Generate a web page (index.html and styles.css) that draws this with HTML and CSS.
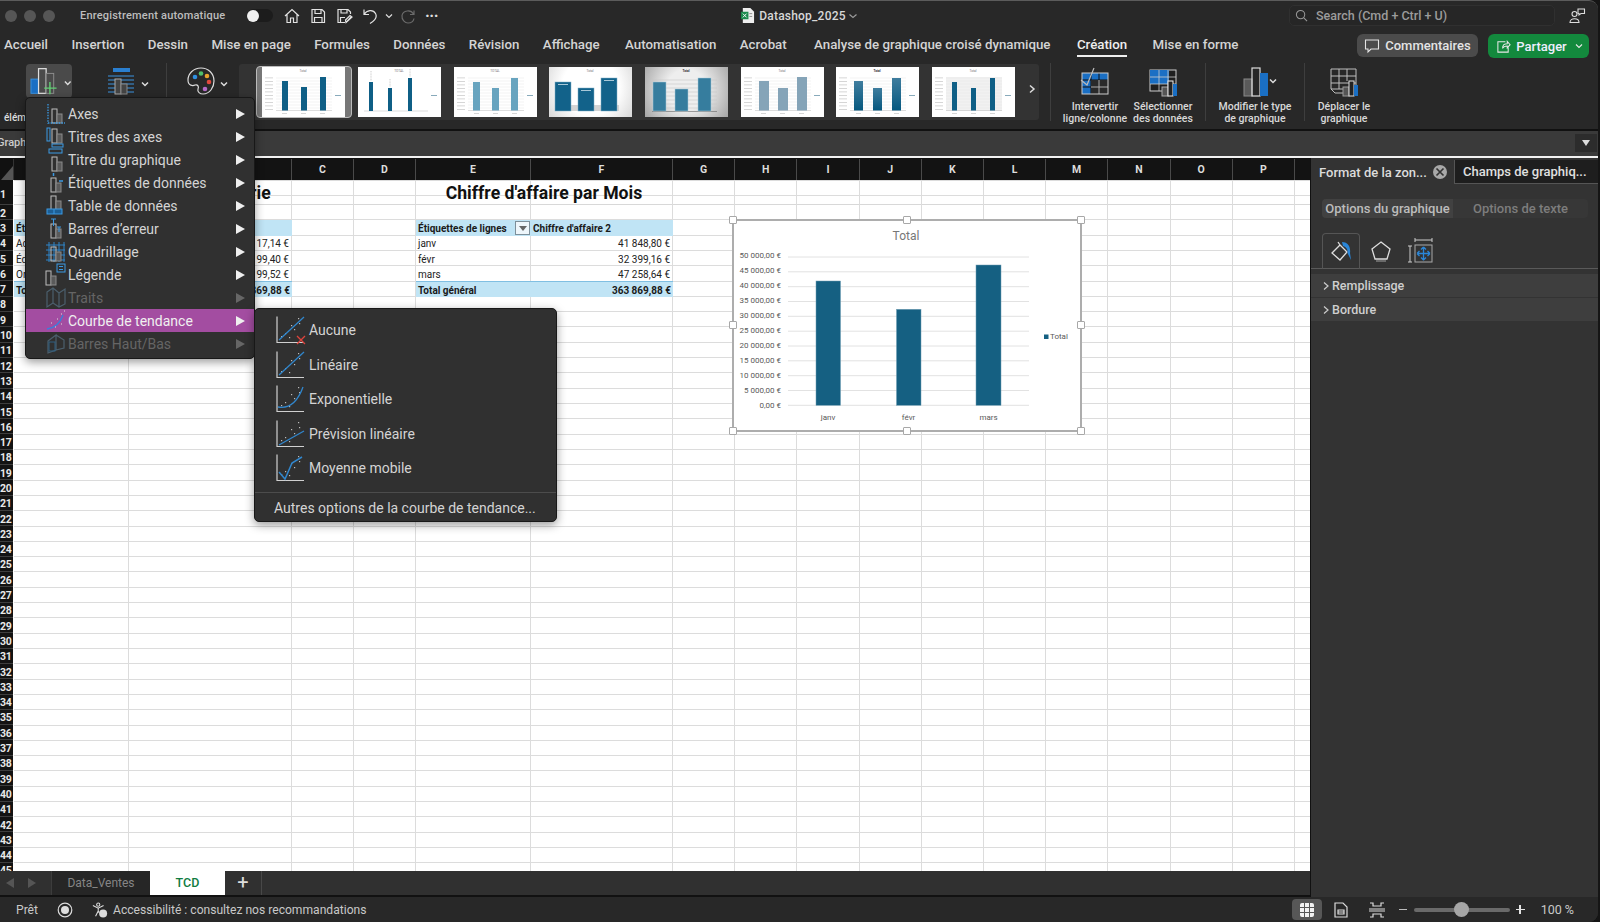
FILE: index.html
```html
<!DOCTYPE html>
<html lang="fr">
<head>
<meta charset="utf-8">
<title>Datashop_2025</title>
<link rel="stylesheet" href="styles.css">
</head>
<body>
<svg class="defs" aria-hidden="true">
  <symbol id="bars" viewBox="0 0 20 24"><rect x="6" y="7" width="5" height="14" fill="none" stroke="#bdbdbd"/><rect x="11" y="12" width="5" height="9" fill="#5a5a5a" stroke="#8a8a8a"/></symbol>
  <symbol id="trend-dots" viewBox="0 0 28 28"><g fill="#bbb"><rect x="5" y="20" width="1.2" height="1.2"/><rect x="9" y="17" width="1.2" height="1.2"/><rect x="13" y="21" width="1.2" height="1.2"/><rect x="15" y="9" width="1.2" height="1.2"/><rect x="18" y="13" width="1.2" height="1.2"/><rect x="22" y="2" width="1.2" height="1.2"/><rect x="23" y="7" width="1.2" height="1.2"/></g><path d="M1 .5V26.5H28" fill="none" stroke="#d0d0d0" stroke-width="1.2"/></symbol>
  <symbol id="t-grid" viewBox="0 0 83 50"><g stroke="#e6e6e6" stroke-width=".5"><path d="M14 11H70M14 14H70M14 17H70M14 20H70M14 23H70M14 26H70M14 29H70M14 32H70M14 35H70M14 38H70M14 41H70"/></g><path d="M14 43.5H70" stroke="#bbb" stroke-width=".5"/><g fill="#ccc"><rect x="3" y="10.500" width="8" height=".8"/><rect x="3" y="14" width="8" height=".8"/><rect x="3" y="17.500" width="8" height=".8"/><rect x="3" y="21" width="8" height=".8"/><rect x="3" y="24.500" width="8" height=".8"/><rect x="3" y="28" width="8" height=".8"/><rect x="3" y="31.500" width="8" height=".8"/><rect x="3" y="35" width="8" height=".8"/><rect x="3" y="38.500" width="8" height=".8"/><rect x="3" y="42" width="8" height=".8"/><rect x="20" y="46" width="5" height=".8"/><rect x="39" y="46" width="5" height=".8"/><rect x="58" y="46" width="5" height=".8"/></g><rect x="73" y="28" width="6" height="1" fill="#8ab"/></symbol>
</svg>

<div class="app">
  <header class="titlebar">
    <div class="tb-left">
      <div class="lights"><i></i><i></i><i></i></div>
      <span class="autosave">Enregistrement automatique</span>
      <span class="toggle"><b></b></span>
      <div class="qa">
        <svg class="qa-icon" viewBox="0 0 18 18"><path d="M2 9 9 2.500 16 9M4 7.500V15.500H7.500V11H10.500V15.500H14V7.500"/></svg>
        <svg class="qa-icon" viewBox="0 0 18 18"><path d="M3 2.500H13L15.500 5V15.500H3ZM6 2.500V6.500H12V2.500M5.500 15.500V10.500H13V15.500"/></svg>
        <svg class="qa-icon" viewBox="0 0 18 18"><path d="M10 15.500H3V2.500H13L15.500 5V7M6 2.500V6H12V2.500M5.500 15V10.500H10M11 15.500 16.500 9.500M11 15.500 10.500 13 15 8.500 17 10Z"/></svg>
        <svg class="qa-icon" viewBox="0 0 18 18"><path d="M3 2.500V7.500H8M3 7.500C6 3 12 2 14.500 6.500 16.500 10 13 14 9 16.500"/></svg>
        <svg class="qa-chev" viewBox="0 0 10 10"><path d="M2 3.500 5 6.500 8 3.500"/></svg>
        <svg class="qa-icon dim redo" viewBox="0 0 18 18"><path d="M15 3.500V7.500H11M14.500 7C12 2.500 4 3 3 8.500 2.500 13 6 16 9 16 12 16 14.500 14 15 11.500"/></svg>
        <span class="more">···</span>
      </div>
    </div>
    <div class="doc-title">
      <svg class="doc-icon" viewBox="0 0 16 18"><path d="M3 1H11L15 5V17H3Z" fill="#eee"/><rect x="1" y="5" width="8" height="8" fill="#1d8a4e"/><path d="M3 7 7 11M7 7 3 11" stroke="#fff"/><path d="M10 7H13M10 10H13" stroke="#8a8a8a"/></svg>
      <span>Datashop_2025</span>
      <svg class="qa-chev dim" viewBox="0 0 10 10"><path d="M1.500 3.500 5 6.500 8.500 3.500"/></svg>
    </div>
    <div class="tb-right">
      <div class="search">
        <svg class="search-icon" viewBox="0 0 14 14"><circle cx="6" cy="6" r="4.500"/><path d="M9.500 9.500 13 13"/></svg>
        <span>Search (Cmd + Ctrl + U)</span>
      </div>
      <svg class="coauth" viewBox="0 0 18 18"><circle cx="6.500" cy="7" r="2.500"/><path d="M2 15.500C2 10.500 11 10.500 11 15.500Z"/><path d="M10 2H16.500V6.500H13L11 8V6.500H10Z"/></svg>
    </div>
  </header>

  <nav class="tabs">
    <div class="tab-list">
      <a>Accueil</a><a>Insertion</a><a>Dessin</a><a>Mise en page</a><a>Formules</a><a>Données</a><a>Révision</a><a>Affichage</a><a class="gap-2">Automatisation</a><a>Acrobat</a><a class="gap-4">Analyse de graphique croisé dynamique</a><a class="active">Création</a><a class="gap-2">Mise en forme</a>
    </div>
    <div class="tab-actions">
      <button class="btn-comments">
        <svg viewBox="0 0 16 16"><path d="M1.500 2H14.500V11H7L4 14V11H1.500Z"/></svg>Commentaires
      </button>
      <button class="btn-share">
        <svg viewBox="0 0 16 16"><path d="M10 3H2V14H13V9M7 10C7 6 9 5 12 5V2.500L15 6 12 9.500V7.500C9 7.500 8 8 7 10Z"/></svg>Partager
        <svg class="share-chev" viewBox="0 0 10 10"><path d="M2 3.500 5 6.500 8 3.500"/></svg>
      </button>
    </div>
  </nav>

  <section class="ribbon">
    <div class="rb-left">
      <div class="rb-top">
        <button class="rb-add">
          <svg class="rb-add-icon" viewBox="0 0 29 28"><rect x="1" y="12" width="8" height="15" fill="#1a6fc4" stroke="#3a93e0"/><rect x="9" y="1" width="8" height="26" fill="none" stroke="#e0e0e0" stroke-width="1.300"/><rect x="17" y="6" width="8" height="21" fill="#4b4b4b" stroke="#8e8e8e"/><path d="M21 15V28M15 21.500H28" stroke="#62d074" stroke-width="1.500"/></svg>
          <svg class="rb-chev" viewBox="0 0 10 10"><path d="M2 3.500 5 6.500 8 3.500"/></svg>
        </button>
        <div class="rb-layout">
          <svg class="rb-layout-icon" viewBox="0 0 28 28"><rect x="6" y="1" width="17" height="4" fill="#2a7fd0"/><path d="M1 9H27M1 13H27M1 17H27M1 21H27M1 25H27" stroke="#3a93e0"/><rect x="8" y="12" width="6" height="15" fill="#444" stroke="#aaa"/><rect x="14" y="17" width="6" height="10" fill="#444" stroke="#888"/></svg>
          <svg class="rb-chev" viewBox="0 0 10 10"><path d="M2 3.500 5 6.500 8 3.500"/></svg>
        </div>
        <i class="rb-div"></i>
        <div class="rb-palette">
          <svg class="rb-palette-icon" viewBox="0 0 28 28"><path d="M14 1C6 1 1 7 1 13 1 19 6 19 8 18 11 17 12 20 11 22 10 25 13 27 16 27 23 27 27 20 27 14 27 6 21 1 14 1Z" fill="none" stroke="#ddd" stroke-width="1.200"/><circle cx="8" cy="10" r="2.300" fill="#2f8fe0"/><circle cx="14" cy="6.500" r="2.300" fill="#4fc06a"/><circle cx="20" cy="9" r="2.300" fill="#e8a22d"/><circle cx="22" cy="15" r="2.300" fill="#e2483d"/><circle cx="18" cy="22" r="2.300" fill="#b46cc8"/></svg>
          <svg class="rb-chev" viewBox="0 0 10 10"><path d="M2 3.500 5 6.500 8 3.500"/></svg>
        </div>
      </div>
      <span class="rb-elem">élément</span>
    </div>

    <div class="gallery">
      <div class="thumb selected"><svg viewBox="0 0 83 50"><rect width="83" height="50" fill="#fff"/><use href="#t-grid" width="83" height="50"/><text class="tt" x="41" y="5">Total</text><g fill="#0f5f86"><rect x="20" y="14" width="6" height="29.500"/><rect x="39" y="20" width="6" height="23.500"/><rect x="58" y="10" width="6" height="33.500"/></g></svg></div>
      <div class="thumb"><svg viewBox="0 0 83 50"><rect width="83" height="50" fill="#fff"/><text class="tt" x="41" y="5">TOTAL</text><path d="M6 44H70" stroke="#bbb" stroke-width=".5"/><path d="M13 4V14M32 12V20M52 2V10" stroke="#ccc" stroke-dasharray="1 .6"/><g fill="#0f5f86"><rect x="11" y="15" width="4" height="29"/><rect x="30" y="21" width="4" height="23"/><rect x="50" y="11" width="4" height="33"/></g><rect x="73" y="28" width="6" height="1" fill="#8ab"/></svg></div>
      <div class="thumb"><svg viewBox="0 0 83 50"><rect width="83" height="50" fill="#fff"/><use href="#t-grid" width="83" height="50"/><text class="tt" x="41" y="5">TOTAL</text><g fill="#68a4bf"><rect x="19" y="15" width="7" height="28.500"/><rect x="38" y="21" width="7" height="22.500"/><rect x="57" y="11" width="7" height="32.500"/></g></svg></div>
      <div class="thumb shade"><svg viewBox="0 0 83 50"><text class="tt" x="41" y="5">Total</text><rect x="6" y="38" width="64" height="6" fill="#d4d4d4"/><g fill="#12628a" stroke="#7fb0c8" stroke-width=".5"><rect x="6" y="15" width="16" height="29"/><rect x="29" y="21" width="16" height="23"/><rect x="52" y="11" width="16" height="33"/></g><g fill="#cfe3ec"><rect x="9" y="17" width="10" height=".8"/><rect x="32" y="23" width="10" height=".8"/><rect x="55" y="13" width="10" height=".8"/></g></svg></div>
      <div class="thumb grey"><svg viewBox="0 0 83 50"><text class="tt dark" x="41" y="5">Total</text><path d="M7 13H72M7 17H72M7 21H72M7 25H72M7 29H72M7 33H72M7 37H72M7 41H72" stroke="#c6c6c6" stroke-width=".6"/><path d="M7 44.500H72" stroke="#666" stroke-width=".6"/><g fill="#367d9e" stroke="#a8cbdb" stroke-width=".5"><rect x="8" y="15" width="13" height="29"/><rect x="30" y="22" width="13" height="22"/><rect x="53" y="11" width="13" height="33"/></g></svg></div>
      <div class="thumb"><svg viewBox="0 0 83 50"><rect width="83" height="50" fill="#fff"/><use href="#t-grid" width="83" height="50"/><text class="tt" x="41" y="5">Total</text><g fill="#85a4b8"><rect x="18" y="14" width="10" height="29.500"/><rect x="37" y="21" width="10" height="22.500"/><rect x="56" y="10" width="10" height="33.500"/></g></svg></div>
      <div class="thumb"><svg viewBox="0 0 83 50"><defs><linearGradient id="bar-grad" x1="0" y1="0" x2="0" y2="1"><stop offset="0" stop-color="#3f7d9e"/><stop offset="1" stop-color="#06587f"/></linearGradient></defs><rect width="83" height="50" fill="#fff"/><use href="#t-grid" width="83" height="50"/><text class="tt dark" x="41" y="5">Total</text><g fill="url(#bar-grad)"><rect x="18" y="14" width="9" height="29.500"/><rect x="37" y="21" width="9" height="22.500"/><rect x="56" y="11" width="9" height="32.500"/></g></svg></div>
      <div class="thumb"><svg viewBox="0 0 83 50"><rect width="83" height="50" fill="#fff"/><rect x="14" y="10" width="56" height="34" fill="#f1f1f1"/><use href="#t-grid" width="83" height="50"/><text class="tt" x="41" y="5">Total</text><g fill="#0f5f86"><rect x="20" y="15" width="5" height="28.500"/><rect x="39" y="21" width="5" height="22.500"/><rect x="58" y="11" width="5" height="32.500"/></g></svg></div>
      <svg class="gallery-next" viewBox="0 0 8 10"><path d="M2 1.500 6 5 2 8.500"/></svg>
    </div>

    <i class="rb-div big"></i>
    <div class="rb-btn w66">
      <svg class="rb-icon" viewBox="0 0 30 30"><rect x="2" y="6" width="26" height="21" fill="#1a6fc4"/><path d="M2 13H28M2 20H28M11 6V27M19 6V27" stroke="#111"/><rect x="11" y="13" width="17" height="14" fill="#2a2a2a"/><path d="M11 20H28M19 13V27" stroke="#aaa"/><rect x="2" y="6" width="26" height="21" fill="none" stroke="#ccc"/><path d="M1 13 7 18 14 1" fill="none" stroke="#bbb" stroke-width="1.200"/></svg>
      <span>Intervertir<br>ligne/colonne</span>
    </div>
    <div class="rb-btn w66">
      <svg class="rb-icon" viewBox="0 0 30 30"><rect x="2" y="3" width="26" height="21" fill="#1f1f1f" stroke="#ccc"/><rect x="2" y="3" width="19" height="14" fill="#1a6fc4"/><path d="M2 10H28M2 17H28M11 3V24M20 3V24" stroke="#ccc" stroke-width=".8"/><rect x="14" y="20" width="6" height="9" fill="#555" stroke="#aaa"/><rect x="20" y="14" width="5" height="15" fill="#222" stroke="#eee"/><rect x="25" y="17" width="4" height="12" fill="#1a6fc4"/></svg>
      <span>Sélectionner<br>des données</span>
    </div>
    <i class="rb-div after-data"></i>
    <div class="rb-btn w90">
      <div class="rb-icon-row">
        <svg class="rb-icon" viewBox="0 0 28 30"><rect x="1" y="12" width="8" height="17" fill="#5a5a5a" stroke="#8a8a8a"/><rect x="9" y="1" width="8" height="28" fill="none" stroke="#ddd" stroke-width="1.200"/><rect x="17" y="6" width="8" height="23" fill="#1a6fc4"/></svg>
        <svg class="rb-chev" viewBox="0 0 10 10"><path d="M2 3.500 5 6.500 8 3.500"/></svg>
      </div>
      <span>Modifier le type<br>de graphique</span>
    </div>
    <i class="rb-div"></i>
    <div class="rb-btn w70">
      <svg class="rb-icon" viewBox="0 0 30 30"><path d="M2 2H27V18M2 2V22H14M2 9H27M2 16H27M10 2V22M18 2V14" fill="none" stroke="#bdbdbd"/><path d="M2 22 6 26H14" fill="none" stroke="#bdbdbd"/><rect x="14" y="20" width="6" height="9" fill="#555" stroke="#999"/><rect x="20" y="14" width="5" height="15" fill="#222" stroke="#ddd"/><rect x="25" y="18" width="4" height="11" fill="#1a6fc4"/></svg>
      <span>Déplacer le<br>graphique</span>
    </div>
  </section>

  <div class="formula">
    <span class="formula-name">Graphique</span>
    <button class="formula-toggle"><i></i></button>
  </div>

  <main class="main">
    <div class="workbook">
      <div class="sheet">
        <div class="corner"><i></i></div>
        <div class="ch">A</div><div class="ch">B</div><div class="ch">C</div><div class="ch">D</div><div class="ch">E</div><div class="ch">F</div><div class="ch">G</div><div class="ch">H</div><div class="ch">I</div><div class="ch">J</div><div class="ch">K</div><div class="ch">L</div><div class="ch">M</div><div class="ch">N</div><div class="ch">O</div><div class="ch">P</div><div class="ch"></div>

        <div class="rh">1</div><div class="rh">2</div><div class="rh">3</div><div class="rh">4</div><div class="rh">5</div><div class="rh">6</div><div class="rh">7</div><div class="rh">8</div><div class="rh">9</div><div class="rh">10</div><div class="rh">11</div><div class="rh">12</div><div class="rh">13</div><div class="rh">14</div><div class="rh">15</div><div class="rh">16</div><div class="rh">17</div><div class="rh">18</div><div class="rh">19</div><div class="rh">20</div><div class="rh">21</div><div class="rh">22</div><div class="rh">23</div><div class="rh">24</div><div class="rh">25</div><div class="rh">26</div><div class="rh">27</div><div class="rh">28</div><div class="rh">29</div><div class="rh">30</div><div class="rh">31</div><div class="rh">32</div><div class="rh">33</div><div class="rh">34</div><div class="rh">35</div><div class="rh">36</div><div class="rh">37</div><div class="rh">38</div><div class="rh">39</div><div class="rh">40</div><div class="rh">41</div><div class="rh">42</div><div class="rh">43</div><div class="rh">44</div><div class="rh">45</div>

        <div class="hlines"></div>
        <div class="vlines"><i></i><i></i><i></i><i></i><i></i><i></i><i></i><i></i><i></i><i></i><i></i><i></i><i></i><i></i><i></i><i></i><i></i></div>

        <div class="cell title left-title">Chiffre d'affaire par Catégorie</div>
        <div class="cell title right-title">Chiffre d'affaire par Mois</div>

        <div class="cell head r3 ca">Étiquettes</div>
        <div class="cell head r3 cb"></div>
        <div class="cell r4 ca">Ad</div>
        <div class="cell r5 ca">Éd</div>
        <div class="cell r6 ca">Or</div>
        <div class="cell num r4 cb">17,14 €</div>
        <div class="cell num r5 cb">99,40 €</div>
        <div class="cell num r6 cb">99,52 €</div>
        <div class="cell head total r7 ca">Total</div>
        <div class="cell head total num r7 cb">363 869,88 €</div>

        <div class="cell head r3 ce">Étiquettes de lignes<span class="filter"><i></i></span></div>
        <div class="cell head r3 cf">Chiffre d'affaire 2</div>
        <div class="cell r4 ce">janv</div>
        <div class="cell r5 ce">févr</div>
        <div class="cell r6 ce">mars</div>
        <div class="cell num r4 cf">41 848,80 €</div>
        <div class="cell num r5 cf">32 399,16 €</div>
        <div class="cell num r6 cf">47 258,64 €</div>
        <div class="cell head total r7 ce">Total général</div>
        <div class="cell head total num r7 cf">363 869,88 €</div>

        <div class="chart">
          <svg class="chart-svg" viewBox="0 0 349 212">
            <text class="ch-title" x="173" y="20">Total</text>
            <g class="ch-grid"><path d="M55 37H296M55 51.800H296M55 66.700H296M55 81.500H296M55 96.300H296M55 111.200H296M55 126H296M55 140.800H296M55 155.700H296M55 170.500H296M55 185.300H296"/></g>
            <g class="ch-y">
              <text x="48" y="38.400">50 000,00 €</text><text x="48" y="53.300">45 000,00 €</text><text x="48" y="68.200">40 000,00 €</text><text x="48" y="83.200">35 000,00 €</text><text x="48" y="98.100">30 000,00 €</text><text x="48" y="113">25 000,00 €</text><text x="48" y="128">20 000,00 €</text><text x="48" y="142.900">15 000,00 €</text><text x="48" y="157.800">10 000,00 €</text><text x="48" y="172.800">5 000,00 €</text><text x="48" y="187.700">0,00 €</text>
            </g>
            <g class="ch-bars"><rect x="83" y="61" width="24.500" height="124.300"/><rect x="163.500" y="89.300" width="24.500" height="96"/><rect x="243" y="45" width="25" height="140.300"/></g>
            <g class="ch-x"><text x="95" y="199.500">janv</text><text x="175.500" y="199.500">févr</text><text x="255.500" y="199.500">mars</text></g>
            <rect class="ch-legend-key" x="311" y="114.500" width="4.500" height="4.500"/>
            <text class="ch-legend" x="317" y="119">Total</text>
          </svg>
          <i class="hd tl"></i><i class="hd tc"></i><i class="hd tr"></i><i class="hd ml"></i><i class="hd mr"></i><i class="hd bl"></i><i class="hd bc"></i><i class="hd br"></i>
        </div>
      </div>

      <div class="sheet-tabs">
        <span class="tri left"></span><span class="tri right"></span>
        <a class="stab">Data_Ventes</a>
        <a class="stab current">TCD</a>
        <a class="stab-add">+</a>
      </div>
    </div>

    <aside class="panel">
      <div class="panel-tabs">
        <div class="ptab on"><span>Format de la zon...</span><span class="ptab-close"><svg viewBox="0 0 10 10"><path d="M2.500 2.500 7.500 7.500M7.500 2.500 2.500 7.500"/></svg></span></div>
        <div class="ptab off">Champs de graphiq...</div>
      </div>
      <div class="segments"><span class="seg on">Options du graphique</span><span class="seg">Options de texte</span></div>
      <div class="icon-tabs">
        <span class="itab on"><svg viewBox="0 0 24 24"><path d="M3 13 11 5 18 12 11 20Z M11 5 9 2" fill="none" stroke="#ddd" stroke-width="1.300"/><path d="M13 2C18 2 22 6 21 13L22 20 18.500 13C19 9 17 7 14 6Z" fill="#2a86d8"/></svg></span>
        <span class="itab"><svg viewBox="0 0 24 24"><path d="M12 3 21 10 18 20H6L3 10Z" fill="none" stroke="#ddd" stroke-width="1.300"/><path d="M7 22H17" stroke="#888" stroke-width="1.300"/></svg></span>
        <span class="itab"><svg viewBox="0 0 24 24"><path d="M6 1H23M6 -1V3M23 -1V3M1 7V23M-1 7H3M-1 23H3" fill="none" stroke="#ccc"/><rect x="6" y="6" width="17" height="17" fill="none" stroke="#aaa"/><path d="M8 14.500H21M14.500 8V21M14.500 8 12 10.500M14.500 8 17 10.500M14.500 21 12 18.500M14.500 21 17 18.500M8 14.500 10.500 12M8 14.500 10.500 17M21 14.500 18.500 12M21 14.500 18.500 17" fill="none" stroke="#2a86d8" stroke-width="1.300"/></svg></span>
      </div>
      <div class="section"><svg viewBox="0 0 8 10"><path d="M2 1.500 6 5 2 8.500"/></svg>Remplissage</div>
      <div class="section"><svg viewBox="0 0 8 10"><path d="M2 1.500 6 5 2 8.500"/></svg>Bordure</div>
    </aside>
  </main>

  <footer class="status">
    <span class="ready">Prêt</span>
    <svg class="rec" viewBox="0 0 16 16"><circle cx="8" cy="8" r="6.800"/><circle class="solid" cx="8" cy="8" r="4"/></svg>
    <svg class="a11y" viewBox="0 0 18 18"><circle cx="7" cy="3" r="1.800"/><path d="M1 4 7 7 13 4M7 7V10M4 16 7 10 8 12"/><circle class="solid" cx="12.500" cy="13" r="4.500"/></svg>
    <span class="a11y-text">Accessibilité : consultez nos recommandations</span>
    <div class="status-right">
      <span class="view on"><svg viewBox="0 0 14 14"><path class="solid" d="M0 2Q0 0 2 0H4V4H0ZM5 0H9V4H5ZM10 0H12Q14 0 14 2V4H10ZM0 5H4V9H0ZM5 5H9V9H5ZM10 5H14V9H10ZM0 10H4V14H2Q0 14 0 12ZM5 10H9V14H5ZM10 10H14V12Q14 14 12 14H10Z"/></svg></span>
      <svg class="view-icon" viewBox="0 0 14 16"><path d="M1 1H9L13 5V15H1ZM4 8H10V12H4ZM4 10H10"/></svg>
      <svg class="view-icon wide" viewBox="0 0 16 16"><path d="M1 1H4V4H12V1H15M1 15H4V12H12V15H15M0 7H16M0 9H16"/></svg>
      <span class="zoom-minus"></span>
      <div class="slider"><b></b></div>
      <span class="zoom-plus"></span>
      <span class="zoom-val">100 %</span>
    </div>
  </footer>

  <div class="menu">
    <div class="mi"><svg class="mi-icon" viewBox="0 0 20 24"><use href="#bars"/><path d="M2 2V21H19" fill="none" stroke="#3b9ae4" stroke-dasharray="1.500 1.200" stroke-width="1.300"/></svg>Axes<i class="arrow"></i></div>
    <div class="mi"><svg class="mi-icon" viewBox="0 0 20 24"><use href="#bars" y="-3"/><rect x="1" y="3" width="3" height="13" fill="none" stroke="#3b9ae4"/><rect x="6" y="19" width="11" height="3" fill="none" stroke="#3b9ae4"/></svg>Titres des axes<i class="arrow"></i></div>
    <div class="mi"><svg class="mi-icon" viewBox="0 0 20 24"><use href="#bars" y="2"/><rect x="3" y="1" width="13" height="4" fill="none" stroke="#3b9ae4"/></svg>Titre du graphique<i class="arrow"></i></div>
    <div class="mi"><svg class="mi-icon" viewBox="0 0 20 24"><use href="#bars" x="-1"/><path d="M7.500 2V5M13 10H17" stroke="#3b9ae4" stroke-width="1.500"/></svg>Étiquettes de données<i class="arrow"></i></div>
    <div class="mi"><svg class="mi-icon" viewBox="0 0 20 24"><use href="#bars" x="-1" y="-5"/><rect x="1" y="15" width="15" height="5" fill="#1d5f95" stroke="#3b9ae4"/><path d="M8 15V20" stroke="#3b9ae4"/></svg>Table de données<i class="arrow"></i></div>
    <div class="mi"><svg class="mi-icon" viewBox="0 0 20 24"><use href="#bars" x="-1"/><path d="M5 2H10M7.500 2V9M11 10H15M13 10V15" fill="none" stroke="#3b9ae4"/></svg>Barres d’erreur<i class="arrow"></i></div>
    <div class="mi"><svg class="mi-icon" viewBox="0 0 20 24"><path d="M0 5H19M0 10H19M0 15H19M0 20H19M3 2V22M8 2V22M13 2V22M18 2V22" stroke="#2f84c8"/><use href="#bars" x="-1"/></svg>Quadrillage<i class="arrow"></i></div>
    <div class="mi"><svg class="mi-icon" viewBox="0 0 20 24"><use href="#bars" x="-6" y="1"/><rect x="11" y="1" width="8" height="8" fill="none" stroke="#3b9ae4"/><path d="M13 3.500H17M13 6.500H17" stroke="#3b9ae4"/></svg>Légende<i class="arrow"></i></div>
    <div class="mi off"><svg class="mi-icon" viewBox="0 0 20 24"><path d="M1 6 7 2 13 7 19 3V18L13 21 7 17 1 21ZM7 2V17M13 7V21" fill="none" stroke="#4b5f6d" stroke-width="1.200"/></svg>Traits<i class="arrow"></i></div>
    <div class="mi hot"><svg class="mi-icon" viewBox="0 0 20 24"><path d="M1 20C8 19 14 15 17 6" fill="none" stroke="#3a7fdc" stroke-width="1.300"/><path d="M5 14H6M9 18H10M11 10H12M15 15H16M15 5H16M18 2H19" stroke="#ddd"/></svg>Courbe de tendance<i class="arrow"></i></div>
    <div class="mi off"><svg class="mi-icon" viewBox="0 0 20 24"><path d="M2 9 10 3V18L2 21ZM10 3 18 8V16L10 18" fill="none" stroke="#4b5f6d" stroke-width="1.200"/><rect x="3" y="10" width="6" height="9" fill="none" stroke="#2f5f80"/></svg>Barres Haut/Bas<i class="arrow"></i></div>
  </div>

  <div class="submenu">
    <div class="si"><svg class="si-icon" viewBox="0 0 28 28"><use href="#trend-dots"/><path d="M3 24 28 1" stroke="#3186cc" stroke-width="1.300"/><path d="M21 20 29 28M29 20 21 28" stroke="#e0433c" stroke-width="1.300"/></svg>Aucune</div>
    <div class="si"><svg class="si-icon" viewBox="0 0 28 28"><use href="#trend-dots"/><path d="M3 24 28 1" stroke="#3186cc" stroke-width="1.300"/></svg>Linéaire</div>
    <div class="si"><svg class="si-icon" viewBox="0 0 28 28"><use href="#trend-dots"/><path d="M2 22C14 24 22 16 27 2" fill="none" stroke="#3186cc" stroke-width="1.300"/></svg>Exponentielle</div>
    <div class="si"><svg class="si-icon" viewBox="0 0 28 28"><use href="#trend-dots"/><path d="M3 25 28 11" stroke="#3186cc" stroke-width="1.300"/></svg>Prévision linéaire</div>
    <div class="si"><svg class="si-icon" viewBox="0 0 28 28"><use href="#trend-dots"/><path d="M3 18 9 25 16 9 26 3" fill="none" stroke="#3186cc" stroke-width="1.500"/></svg>Moyenne mobile</div>
    <hr class="si-sep">
    <div class="si-more">Autres options de la courbe de tendance...</div>
  </div>
</div>
</body>
</html>
```

FILE: styles.css
```css
* { box-sizing: border-box; }
html, body { margin: 0; height: 100%; }
body { background: #151515; font-family: Roboto, "Liberation Sans", sans-serif; overflow: hidden; color: #ddd; }
.defs { width: 0; height: 0; position: absolute; }
i { display: block; }
button { font: inherit; border: 0; padding: 0; color: inherit; }

.app { position: relative; width: 1598px; height: 922px; background: #282828; border-top: 1px solid #5c5c5c; border-radius: 0 9px 9px 0; overflow: hidden; display: flex; flex-direction: column; }

/* title bar */
.titlebar { height: 29px; flex: none; display: grid; grid-template-columns: 1fr auto 1fr; align-items: center; }
.tb-left { display: flex; align-items: center; padding-left: 5px; }
.lights { display: flex; gap: 7px; width: 75px; }
.lights i { width: 12px; height: 12px; border-radius: 50%; background: #565656; }
.autosave { font-size: 11px; font-weight: 500; color: #bdbdbd; width: 167px; white-space: nowrap; letter-spacing: .2px; }
.toggle { width: 26px; height: 13px; border-radius: 7px; background: #1c1c1c; display: flex; align-items: center; }
.toggle b { width: 12px; height: 12px; border-radius: 50%; background: #f0f0f0; }
.qa { display: flex; align-items: center; gap: 8px; margin-left: 10px; }
.qa-icon { width: 18px; height: 18px; fill: none; stroke: #e2e2e2; stroke-width: 1.200; }
.qa-icon.dim { stroke: #6a6a6a; }
.qa-icon.redo { margin-left: -2px; }
.qa-chev { width: 10px; height: 10px; fill: none; stroke: #ddd; stroke-width: 1.200; margin: 0 -1px 0 -3px; }
.qa-chev.dim { stroke: #999; margin: 0 0 0 -2px; }
.more { font-size: 16px; font-weight: 700; color: #ddd; letter-spacing: -.5px; line-height: 1; }
.doc-title { display: flex; align-items: center; gap: 4px; font-size: 12px; font-weight: 500; color: #d8d8d8; letter-spacing: .2px; }
.doc-icon { width: 15px; height: 17px; }
.tb-right { display: flex; align-items: center; justify-content: flex-end; padding-right: 12px; gap: 13px; }
.search { width: 266px; height: 21px; border: 1px solid #303030; border-radius: 5px; background: #262626; display: flex; align-items: center; padding-left: 5px; gap: 8px; font-size: 12.500px; font-weight: 500; color: #9c9c9c; }
.search-icon { width: 13px; height: 13px; fill: none; stroke: #999; stroke-width: 1.100; }
.coauth { width: 18px; height: 18px; fill: none; stroke: #ddd; stroke-width: 1.100; }

/* tabs */
.tabs { height: 30px; flex: none; display: flex; justify-content: space-between; }
.tab-list { display: flex; gap: 23.400px; padding-left: 4px; font-size: 13.300px; font-weight: 500; color: #d4d4d4; white-space: nowrap; }
.tab-list a { height: 27px; line-height: 30px; }
.tab-list a.gap-2 { margin-left: 2px; }
.tab-list a.gap-4 { margin-left: 4px; }
.tab-list a.active { color: #eee; border-bottom: 2px solid #eee; margin-left: 3px; }
.tab-actions { display: flex; gap: 10px; padding: 4px 9px 0 0; }
.btn-comments { width: 121px; height: 23px; border-radius: 6px; background: #4b4b4b; display: flex; align-items: center; justify-content: center; gap: 5px; font-size: 13px; font-weight: 500; color: #e4e4e4; }
.btn-comments svg { width: 16px; height: 16px; fill: none; stroke: #e4e4e4; stroke-width: 1.100; }
.btn-share { width: 101px; height: 24px; border-radius: 6px; background: #13893d; display: flex; align-items: center; justify-content: center; gap: 5px; font-size: 13px; font-weight: 500; color: #eef; padding-left: 3px; }
.btn-share svg { width: 15px; height: 15px; fill: none; stroke: #e8e8e8; stroke-width: 1.100; }
.btn-share .share-chev { width: 10px; height: 10px; margin-left: 2px; }

/* ribbon */
.ribbon { height: 71px; flex: none; display: flex; align-items: flex-start; padding: 4px 0 0 4px; background: #282828; border-bottom: 2px solid #111; }
.rb-left { width: 235px; flex: none; display: flex; flex-direction: column; }
.rb-top { display: flex; align-items: flex-start; height: 34px; padding-left: 22px; }
.rb-add { width: 46px; height: 34px; border-radius: 4px; background: #4a4a4a; display: flex; align-items: flex-start; padding: 3px 0 0 4px; }
.rb-add-icon { width: 29px; height: 28px; }
.rb-chev { width: 10px; height: 10px; fill: none; stroke: #ddd; stroke-width: 1.500; margin-top: 12px; }
.rb-add .rb-chev { margin: 11px 0 0 5px; }
.rb-layout { display: flex; margin-left: 35px; padding-top: 3px; gap: 5px; width: 59px; }
.rb-layout-icon, .rb-palette-icon { width: 28px; height: 28px; flex: none; }
.rb-div { width: 1px; height: 58px; background: #3e3e3e; flex: none; margin-top: -1px; }
.rb-left .rb-div { height: 34px; margin-right: 20px; }
.rb-div.after-data { margin-left: 8px; }
.rb-palette { display: flex; padding-top: 3px; gap: 4px; }
.rb-elem { margin-top: 13px; font-size: 10px; font-weight: 500; color: #ddd; line-height: 14px; white-space: nowrap; }
.gallery { width: 800px; flex: none; height: 56px; background: #333; border-radius: 3px; display: flex; align-items: center; padding-left: 17px; }
.thumb { width: 95.700px; flex: none; height: 52px; padding: 1px 6.350px; display: flex; }
.thumb svg { width: 83px; height: 50px; display: block; }
.thumb.selected { background: #777; border: 1px solid #bbb; border-radius: 4px; padding: 0 5.350px; }
.thumb.shade svg { background: radial-gradient(circle at 50% 40%, #fff 55%, #d8d8d8); }
.thumb.grey svg { background: radial-gradient(circle at 50% 45%, #eee 40%, #a5a5a5); }
.tt { font-size: 3.200px; fill: #777; text-anchor: middle; }
.tt.dark { fill: #333; font-weight: 700; }
.gallery-next { width: 8px; height: 10px; fill: none; stroke: #ddd; stroke-width: 1.500; margin-left: 6px; margin-top: -6px; }
.rb-div.big { margin-left: 11px; margin-right: 10px; }
.rb-btn { flex: none; display: flex; flex-direction: column; align-items: center; font-size: 10.500px; font-weight: 500; line-height: 11.500px; color: #d8d8d8; text-align: center; white-space: nowrap; }
.rb-btn span { margin-top: 4px; }
.w66 { width: 68px; }
.w90 { width: 98px; }
.w70 { width: 78px; }
.rb-icon { width: 30px; height: 30px; display: block; flex: none; margin-top: 3px; }
.rb-icon-row { display: flex; padding-left: 9px; }
.rb-icon-row .rb-chev { margin-left: -4px; }

/* formula */
.formula { height: 27px; flex: none; background: #3a3a3a; border-bottom: 2px solid #f2f2f2; display: flex; align-items: center; justify-content: space-between; overflow: hidden; padding-bottom: 2px; }
.formula-name { font-size: 11px; font-weight: 500; color: #ccc; margin-left: -3px; }
.formula-toggle { width: 22px; height: 18px; background: #2c2c2c; margin-right: 1px; display: flex; align-items: center; justify-content: center; }
.formula-toggle i { border-left: 4px solid transparent; border-right: 4px solid transparent; border-top: 6px solid #ddd; }

/* main */
.main { flex: 1; min-height: 0; display: flex; }
.workbook { width: 1310px; flex: none; display: flex; flex-direction: column; }
.sheet { position: relative; flex: 1; min-height: 0; overflow: hidden; background: #fff; display: grid; grid-template-columns: 14px 115px 163px 62px 62px 115px 142px repeat(11, 62.200px); grid-template-rows: 21px 25px repeat(44, 15.310px); border-top: 1px solid #111; align-content: start; }
.corner { grid-area: 1 / 1; background: #111; border-right: 1px solid #333; position: relative; display: flex; align-items: flex-end; justify-content: flex-end; }
.corner i { border-left: 12px solid transparent; border-bottom: 14px solid #555; }
.ch { background: #131313; border-right: 1px solid #4a4a4a; color: #ddd; font-size: 10.500px; font-weight: 700; display: flex; align-items: center; justify-content: center; }
.rh { grid-column: 1; width: 13px; background: #131313; border-bottom: 1px solid #3e3e3e; color: #e8e8e8; font-size: 10.500px; font-weight: 700; display: flex; align-items: center; padding-top: 2px; letter-spacing: -.3px; z-index: 1; white-space: nowrap; }
.ch + .rh { padding-top: 5px; }
.hlines { grid-column: 2 / -1; grid-row: 2 / -1; background: linear-gradient(#d8d8d8, #d8d8d8) 0 24px / 100% 1px no-repeat, repeating-linear-gradient(to bottom, transparent 0 14.310px, #dcdcdc 14.310px 15.310px) 0 25px; }
.vlines { grid-column: 2 / -1; grid-row: 2 / -1; display: grid; grid-template-columns: subgrid; }
.vlines i { border-right: 1px solid #dcdcdc; }
.cell { font-size: 10px; color: #222; display: flex; align-items: center; padding: 2px 2px 0; white-space: nowrap; overflow: hidden; position: relative; background: #fff; margin: 0 1px 1px 0; }
.cell.title { background: none; font-size: 17.600px; font-weight: 700; color: #111; justify-content: center; grid-row: 2; overflow: visible; padding-top: 2px; }
.left-title { grid-column: 2 / 4; padding-left: 4px; }
.right-title { grid-column: 6 / 8; }
.cell.head { background: #c0e4f5; font-weight: 700; color: #1a1a1a; margin: 0; }
.cell.num { justify-content: flex-end; }
.cell.total { border-top: 1px solid #80bfe2; padding-top: 1px; }
.r3 { grid-row: 4; } .r4 { grid-row: 5; } .r5 { grid-row: 6; } .r6 { grid-row: 7; } .r7 { grid-row: 8; }
.ca { grid-column: 2; } .cb { grid-column: 3; } .ce { grid-column: 6; } .cf { grid-column: 7; }
.filter { position: absolute; right: 1px; top: 1px; width: 15px; height: 14px; border: 1px solid #7d8f9a; background: #eef6fb; display: flex; align-items: center; justify-content: center; }
.filter i { border-left: 4px solid transparent; border-right: 4px solid transparent; border-top: 5px solid #666; }

/* chart: floating object on the sheet */
.chart { position: absolute; left: 732px; top: 60px; width: 350px; height: 213px; background: #fff; border: 2px solid #adadad; }
.chart-svg { position: absolute; left: -1px; top: -1px; width: 349px; height: 212px; }
.ch-title { font-size: 12px; fill: #777; text-anchor: middle; }
.ch-grid path { stroke: #e2e2e2; stroke-width: 1; fill: none; }
.ch-y text { font-size: 8px; fill: #595959; text-anchor: end; }
.ch-x text { font-size: 8px; fill: #595959; text-anchor: middle; }
.ch-bars rect { fill: #156082; stroke: #6f9db3; stroke-width: .5; }
.ch-legend-key { fill: #156082; }
.ch-legend { font-size: 8px; fill: #595959; }
.hd { position: absolute; width: 8px; height: 8px; background: #fff; border: 1px solid #a8a8a8; border-radius: 1px; }
.tl { left: -5px; top: -5px; } .tc { left: 169px; top: -5px; } .tr { right: -5px; top: -5px; }
.ml { left: -5px; top: 100px; } .mr { right: -5px; top: 100px; }
.bl { left: -5px; bottom: -5px; } .bc { left: 169px; bottom: -5px; } .br { right: -5px; bottom: -5px; }

/* sheet tabs */
.sheet-tabs { height: 26px; flex: none; background: #303030; border-bottom: 2px solid #111; display: flex; align-items: flex-start; }
.tri { width: 0; height: 0; border-top: 5px solid transparent; border-bottom: 5px solid transparent; margin-top: 7px; }
.tri.left { border-right: 8px solid #555; margin-left: 6px; }
.tri.right { border-left: 8px solid #555; margin-left: 14px; margin-right: 15px; }
.stab { height: 24px; line-height: 24px; font-size: 12px; text-align: center; }
.stab:not(.current) { width: 99px; background: #262626; color: #858585; border-left: 1px solid #3c3c3c; }
.stab.current { width: 75px; background: #fff; color: #107c41; font-weight: 500; font-size: 12.500px; }
.stab-add { width: 37px; height: 24px; line-height: 23px; font-size: 20px; text-align: center; color: #ddd; border-right: 1px solid #484848; }

/* panel */
.panel { flex: 1; background: #333; border-left: 1px solid #111; display: flex; flex-direction: column; }
.panel-tabs { display: flex; height: 26px; flex: none; font-size: 13px; font-weight: 500; padding-top: 2px; }
.ptab { display: flex; align-items: center; white-space: nowrap; }
.ptab.on { width: 144px; padding-left: 8px; color: #dcdcdc; justify-content: space-between; padding-right: 7px; border-right: 1px solid #555; }
.ptab.off { flex: 1; background: #1e1e1e; color: #e0e0e0; padding-left: 8px; border-bottom: 1px solid #555; }
.ptab-close { width: 14px; height: 14px; border-radius: 50%; background: #a8a8a8; display: flex; }
.ptab-close svg { width: 14px; height: 14px; fill: none; stroke: #333; stroke-width: 1.200; }
.segments { display: flex; margin: 15px 10px 0 11px; height: 19px; border-radius: 4px; background: #373737; font-size: 13px; font-weight: 500; color: #7d7d7d; }
.seg { display: flex; align-items: center; justify-content: center; flex: 1; white-space: nowrap; border-radius: 4px 0 0 4px; }
.seg.on { flex: none; width: 131px; background: #414141; color: #bcbcbc; }
.icon-tabs { display: flex; margin-top: 15px; height: 36px; padding-left: 11px; gap: 2px; border-bottom: 1px solid #5a5a5a; }
.itab { width: 38px; height: 36px; display: flex; align-items: center; justify-content: center; }
.itab svg { width: 24px; height: 24px; overflow: visible; }
.itab.on { border: 1px solid #555; border-bottom: 0; border-radius: 4px 4px 0 0; }
.section { height: 23px; margin-top: 1px; background: #3e3e3e; display: flex; align-items: center; padding-left: 11px; gap: 2px; font-size: 12.500px; font-weight: 500; color: #cfcfcf; }
.icon-tabs + .section { margin-top: 5px; }
.section svg { width: 8px; height: 10px; fill: none; stroke: #ccc; stroke-width: 1.200; }

/* status */
.status { height: 25px; flex: none; background: #282828; display: flex; align-items: center; font-size: 12.100px; color: #c8c8c8; }
.ready { margin-left: 16px; width: 41px; }
.rec { width: 16px; height: 16px; fill: none; stroke: #ddd; stroke-width: 1.200; }
.rec .solid, .a11y .solid { fill: #ddd; stroke: none; }
.a11y { width: 16px; height: 18px; margin-left: 19px; fill: none; stroke: #ddd; stroke-width: 1.200; }
.a11y-text { margin-left: 5px; white-space: nowrap; }
.status-right { margin-left: auto; display: flex; align-items: center; padding-right: 24px; }
.view { width: 30px; height: 21px; border-radius: 4px; display: flex; align-items: center; justify-content: center; }
.view.on { background: #575757; }
.view svg { width: 14px; height: 14px; }
.view .solid { fill: #f2f2f2; }
.view-icon { width: 14px; height: 16px; fill: none; stroke: #dcdcdc; stroke-width: 1.200; margin-left: 12px; }
.view-icon.wide { width: 16px; margin-left: 21px; }
.zoom-minus, .zoom-plus { width: 8px; height: 1.500px; background: #bbb; margin-left: 14px; position: relative; display: block; }
.zoom-plus { margin-left: 6px; width: 9px; background: #e4e4e4; }
.zoom-plus::after { content: ""; position: absolute; left: 3.750px; top: -3.750px; width: 1.500px; height: 9px; background: #e4e4e4; }
.slider { width: 96px; height: 4px; margin-left: 7px; border-radius: 2px; background: #6a6a6a; display: flex; align-items: center; justify-content: center; }
.slider b { width: 15px; height: 15px; border-radius: 50%; background: #a6a6a6; flex: none; }
.zoom-val { margin-left: 16px; font-size: 12.500px; color: #c8c8c8; white-space: nowrap; }

/* menus float over the sheet */
.menu, .submenu { position: absolute; background: #303030; border: 1px solid #181818; border-radius: 5px; box-shadow: 0 3px 10px rgba(0,0,0,.4); font-size: 14px; color: #d4d4d4; z-index: 5; }
.menu { left: 25px; top: 96px; width: 230px; height: 262px; padding: 4px 0; }
.mi { height: 23px; display: flex; align-items: center; padding-left: 20px; white-space: nowrap; }
.mi-icon { width: 20px; height: 24px; margin-right: 2px; flex: none; overflow: visible; }
.arrow { margin-left: auto; margin-right: 9px; border-left: 9px solid #efefef; border-top: 5px solid transparent; border-bottom: 5px solid transparent; }
.mi.off { color: #656565; }
.mi.off .arrow { border-left-color: #666; }
.mi.hot { background: #a34da1; color: #f0f0f0; }
.submenu { left: 254px; top: 307px; width: 303px; height: 214px; padding-top: 4px; }
.si { height: 34.500px; display: flex; align-items: center; padding-left: 21px; gap: 5px; white-space: nowrap; }
.si-icon { width: 28px; height: 28px; flex: none; overflow: visible; }
.si-sep { border: 0; height: 1px; background: #4c4c4c; margin: 6px 0 0; }
.si-more { padding-left: 19px; margin-top: 7px; line-height: 17px; white-space: nowrap; }
```
